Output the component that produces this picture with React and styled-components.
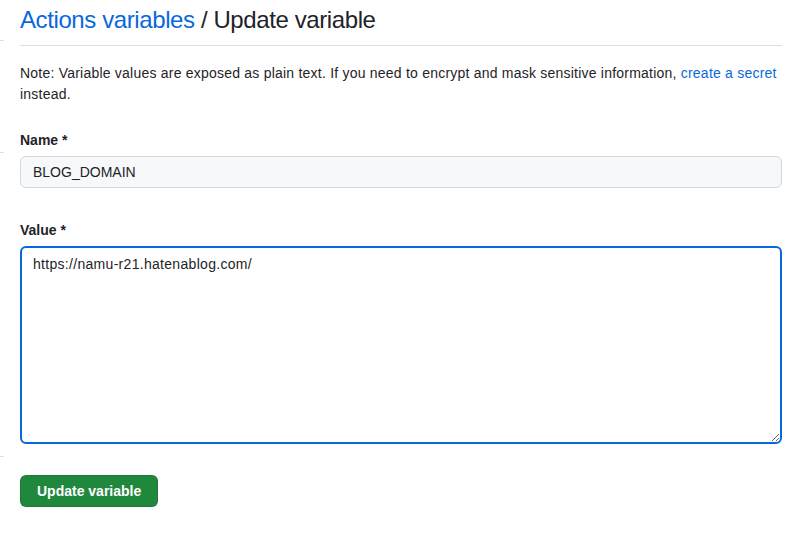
import styled, { createGlobalStyle } from "styled-components";

const GlobalStyle = createGlobalStyle`
  body {
    margin: 0;
    background: #ffffff;
    color: #1f2328;
    font-family: "Liberation Sans", Arial, sans-serif;
    font-size: 14px;
    line-height: 1.5;
  }
`;

const Layout = styled.div`
  display: flex;
  gap: 16px;
  padding-right: 20px;
`;

const SidebarEdge = styled.div`
  width: 4px;
  flex: none;
  display: flex;
  flex-direction: column;
`;

const SidebarDivider = styled.div`
  height: 1px;
  background: #d8dee4;
  margin-top: ${(props) => props.offset}px;
`;

const Main = styled.main`
  flex: 1;
  min-width: 0;
`;

const Heading = styled.h2`
  margin: 5px 0 0;
  padding-bottom: 10px;
  font-size: 24px;
  font-weight: 400;
  line-height: 30px;
  letter-spacing: -0.4px;
  border-bottom: 1px solid #d8dee4;
`;

const Link = styled.a`
  color: #0969da;
  text-decoration: none;
`;

const Note = styled.p`
  margin: 17px 0 25px;
  line-height: 21px;
  letter-spacing: 0.22px;
`;

const Field = styled.div`
  margin-bottom: ${(props) => props.spacing}px;
`;

const Label = styled.label`
  display: block;
  font-weight: 700;
  line-height: 21px;
  margin-bottom: 5px;
`;

const TextInput = styled.input`
  display: block;
  box-sizing: border-box;
  width: 100%;
  height: 32px;
  margin: 0;
  padding: 0 12px;
  font: inherit;
  color: #1f2328;
  background: #f6f8fa;
  border: 1px solid #d0d7de;
  border-radius: 6px;
  outline: none;
`;

const TextArea = styled.textarea`
  display: block;
  box-sizing: border-box;
  width: 100%;
  height: 198px;
  margin: 0;
  padding: 6px 11px;
  font: inherit;
  line-height: 20px;
  letter-spacing: 0.3px;
  color: #1f2328;
  background: #ffffff;
  border: 2px solid #0969da;
  border-radius: 6px;
  outline: none;
  resize: vertical;
`;

const PrimaryButton = styled.button`
  display: block;
  height: 32px;
  margin: 0;
  padding: 0 16px;
  font: inherit;
  font-weight: 700;
  color: #ffffff;
  background: #1f883d;
  border: 1px solid rgba(31, 35, 40, 0.15);
  border-radius: 6px;
  cursor: pointer;
`;

export default function App() {
  return (
    <>
      <GlobalStyle />
      <Layout>
        <SidebarEdge>
          <SidebarDivider offset={40} />
          <SidebarDivider offset={111} />
          <SidebarDivider offset={303} />
        </SidebarEdge>
        <Main>
          <Heading>
            <Link href="#">Actions variables</Link> / Update variable
          </Heading>
          <Note>
            Note: Variable values are exposed as plain text. If you need to
            encrypt and mask sensitive information,{" "}
            <Link href="#">create a secret</Link> instead.
          </Note>
          <Field spacing={32}>
            <Label htmlFor="name">Name *</Label>
            <TextInput id="name" defaultValue="BLOG_DOMAIN" />
          </Field>
          <Field spacing={31}>
            <Label htmlFor="value">Value *</Label>
            <TextArea
              id="value"
              defaultValue="https://namu-r21.hatenablog.com/"
            />
          </Field>
          <PrimaryButton type="button">Update variable</PrimaryButton>
        </Main>
      </Layout>
    </>
  );
}
